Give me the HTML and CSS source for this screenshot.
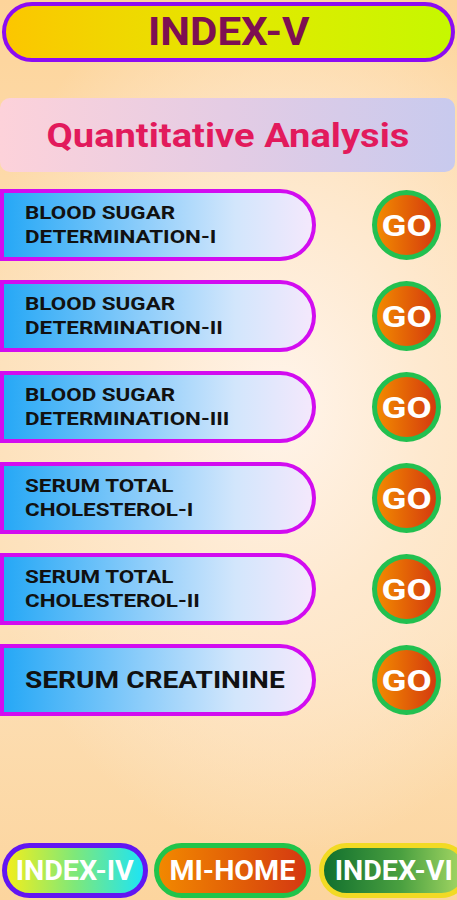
FILE: index.html
```html
<!DOCTYPE html>
<html>
<head>
<meta charset="utf-8">
<link rel="stylesheet" href="styles.css">
</head>
<body>
<div class="page">
  <header class="title-bar"><span class="wide">INDEX-V</span></header>
  <div class="section"><span class="wide">Quantitative Analysis</span></div>
  <div class="list">
    <div class="row"><div class="label"><span class="txt">BLOOD SUGAR<br>DETERMINATION-I</span></div><div class="go"><span class="wide">GO</span></div></div>
    <div class="row"><div class="label"><span class="txt">BLOOD SUGAR<br>DETERMINATION-II</span></div><div class="go"><span class="wide">GO</span></div></div>
    <div class="row"><div class="label"><span class="txt">BLOOD SUGAR<br>DETERMINATION-III</span></div><div class="go"><span class="wide">GO</span></div></div>
    <div class="row"><div class="label"><span class="txt">SERUM TOTAL<br>CHOLESTEROL-I</span></div><div class="go"><span class="wide">GO</span></div></div>
    <div class="row"><div class="label"><span class="txt">SERUM TOTAL<br>CHOLESTEROL-II</span></div><div class="go"><span class="wide">GO</span></div></div>
    <div class="row"><div class="label single"><span class="txt">SERUM CREATININE</span></div><div class="go"><span class="wide">GO</span></div></div>
  </div>
  <nav class="footer">
    <div class="nav-btn prev"><span class="wide">INDEX-IV</span></div>
    <div class="nav-btn home"><span class="wide">MI-HOME</span></div>
    <div class="nav-btn next"><span class="wide">INDEX-VI</span></div>
  </nav>
</div>
</body>
</html>
```

FILE: styles.css
```css
* { box-sizing: border-box; }
html, body { margin: 0; padding: 0; }
body {
  width: 457px;
  height: 900px;
  overflow: hidden;
  font-family: Roboto, "Liberation Sans", sans-serif;
  font-weight: 700;
  background:
    radial-gradient(ellipse 70% 50% at 62% 45%, #fff4ea 0%, #fee9cf 45%, rgba(253, 217, 166, 0) 100%),
    linear-gradient(to bottom, #fdd49a 0%, #fde0b8 40%, #fde0b8 70%, #fcd59e 100%);
}
.page {
  height: 900px;
  display: flex;
  flex-direction: column;
}
.wide {
  display: inline-block;
  transform-origin: center center;
}
.txt {
  display: inline-block;
  transform: scaleX(1.18);
  transform-origin: left center;
}
.title-bar {
  margin: 2px 2px 0;
  height: 60px;
  border: 4px solid #8c0cf2;
  border-radius: 30px;
  background: linear-gradient(to right, #fcc600, #e4e800 50%, #c6f800);
  color: #7d0f52;
  font-size: 39px;
  display: flex;
  align-items: center;
  justify-content: center;
}
.title-bar .wide { transform: scaleX(1.08); }
.section {
  margin: 36px 2px 0 0;
  height: 74px;
  border-radius: 10px;
  background: linear-gradient(to right, #fdd2da, #e4cce4 50%, #c8caee);
  color: #e21a5c;
  font-size: 34px;
  display: flex;
  align-items: center;
  justify-content: center;
}
.section .wide { transform: scaleX(1.12); }
.list {
  margin-top: 17px;
  display: flex;
  flex-direction: column;
  gap: 19px;
}
.row {
  display: flex;
  align-items: center;
  height: 72px;
}
.label {
  width: 316px;
  height: 72px;
  border: 4px solid #d20cf0;
  border-radius: 0 36px 36px 0;
  background: linear-gradient(to right, #26a8f6 0%, #8dcdfa 45%, #d2e6fc 75%, #f4e8fc 100%);
  color: #111;
  font-size: 19px;
  line-height: 24px;
  padding-left: 21px;
  display: flex;
  align-items: center;
}
.label.single { font-size: 24px; }
.label.single .txt { transform: scaleX(1.17); }
.go {
  margin-left: 56px;
  width: 69px;
  height: 70px;
  border-radius: 50%;
  border: 5px solid #22c050;
  background: linear-gradient(to right, #f28a00, #e05a08 60%, #d43a10);
  color: #fff;
  font-size: 30px;
  display: flex;
  align-items: center;
  justify-content: center;
}
.go .wide { transform: scaleX(1.22); }
.footer {
  margin-top: auto;
  margin-bottom: 2px;
  display: flex;
  gap: 6px;
  padding-left: 2px;
}
.nav-btn {
  flex: none;
  height: 55px;
  border-radius: 28px;
  border: 5px solid;
  color: #fff;
  font-size: 27px;
  display: flex;
  align-items: center;
  justify-content: center;
}
.nav-btn .wide { transform: scaleX(1.06); }
.prev {
  width: 146px;
  border-color: #6216f2;
  background: linear-gradient(to right, #f2ee1c, #7ee87a 50%, #1ee4f4);
}
.home {
  width: 157px;
  border-color: #20c44a;
  background: linear-gradient(to right, #f28800, #e05a08 60%, #d43812);
}
.next {
  width: 150px;
  margin-left: 2px;
  border-color: #f2da24;
  background: linear-gradient(to right, #12702e, #4aa040 55%, #a6d864);
}
```
